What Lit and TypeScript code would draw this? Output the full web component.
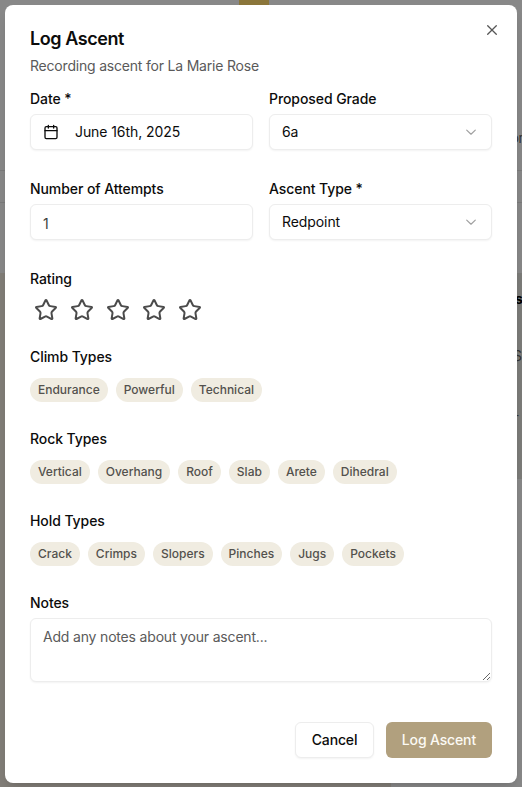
import { LitElement, html, css, svg } from "lit";
import { customElement, property, state } from "lit/decorators.js";

const calendar = svg`<path d="M8 2v4M16 2v4"/><rect width="18" height="18" x="3" y="4" rx="2"/><path d="M3 10h18"/>`;
const star = svg`<path d="M11.525 2.295a.53.53 0 0 1 .95 0l2.31 4.679a2.123 2.123 0 0 0 1.595 1.16l5.166.756a.53.53 0 0 1 .294.904l-3.736 3.638a2.123 2.123 0 0 0-.611 1.878l.882 5.14a.53.53 0 0 1-.771.56l-4.618-2.428a2.122 2.122 0 0 0-1.973 0L6.396 21.01a.53.53 0 0 1-.77-.56l.881-5.139a2.122 2.122 0 0 0-.611-1.879L2.16 9.795a.53.53 0 0 1 .294-.906l5.165-.755a2.122 2.122 0 0 0 1.597-1.16z"/>`;

const icon = (shape: unknown, size: number) => html`<svg
  class="icon" width=${size} height=${size} viewBox="0 0 24 24" fill="none"
  stroke="currentColor" stroke-width="2" stroke-linecap="round" stroke-linejoin="round"
>${shape}</svg>`;

@customElement("tag-group")
class TagGroup extends LitElement {
  @property() label = "";
  @property({ attribute: false }) tags: string[] = [];

  static styles = css`
    :host { display: flex; flex-direction: column; gap: 14px; }
    .label { font-size: 14px; line-height: 14px; font-weight: 500; letter-spacing: -0.08px; color: #0c0c0c; }
    .tags { display: flex; flex-wrap: wrap; gap: 8px; }
    .tag {
      display: flex; align-items: center; height: 24px; box-sizing: border-box;
      padding: 0 8px; border-radius: 12px; background: #f0ece1; color: #53514d;
      font-size: 12px; line-height: 16px; font-weight: 500; white-space: nowrap;
    }
  `;

  render() {
    return html`<span class="label">${this.label}</span>
      <div class="tags">${this.tags.map((t) => html`<span class="tag">${t}</span>`)}</div>`;
  }
}

@customElement("app-root")
class AppRoot extends LitElement {
  @state() attempts = "1";

  static styles = css`
    :host {
      display: block; position: relative; width: 522px; height: 787px; overflow: hidden;
      box-sizing: border-box; padding: 5px; background: #888888;
      font-family: Inter, sans-serif; font-size: 14px; color: #0c0c0c;
    }
    * { box-sizing: border-box; }
    .patch { position: absolute; }
    .gold { left: 239px; top: 0; width: 30px; height: 10px; background: #8b763b; }
    .photo { left: 0; top: 273px; width: 391px; height: 514px; background: #827e78; }
    .panel { right: 0; top: 273px; width: 40px; height: 206px; background: #7c7c79; }
    .rule { left: 0; width: 522px; height: 1px; background: #7b7b7b; }
    .rule-a { top: 170px; }
    .rule-b { top: 202px; }
    .peek { position: absolute; left: 515px; white-space: nowrap; line-height: 20px; }
    .peek-a { top: 128px; left: 511px; font-size: 13px; letter-spacing: -0.3px; color: #303030; }
    .peek-b { top: 289px; left: 515px; font-weight: 700; color: #000; }
    .peek-c { top: 346px; left: 513px; color: #343434; }
    .peek-d { top: 405px; left: 513px; color: #343434; }
    .dialog {
      position: relative; display: flex; flex-direction: column; width: 512px; height: 778px;
      padding: 24px 25px 25px; border-radius: 8px; background: #fff;
      box-shadow: 0 10px 15px -3px rgb(0 0 0 / 0.1), 0 4px 6px -4px rgb(0 0 0 / 0.1);
    }
    .close {
      position: absolute; right: 17px; top: 17px; width: 16px; height: 16px;
      padding: 0; border: 0; background: none; color: #565656;
    }
    .icon { display: block; flex: none; }
    .title { margin: 0; padding-top: 1px; font-size: 18px; line-height: 18px; font-weight: 600; letter-spacing: -0.43px; }
    .subtitle { margin: 8px 0 0; line-height: 20px; letter-spacing: -0.2px; color: #5a5a5a; }
    .form { display: flex; flex-direction: column; gap: 30px; margin-top: 16px; }
    .grid { display: grid; grid-template-columns: 1fr 1fr; gap: 32px 16px; }
    .field { display: flex; flex-direction: column; gap: 8px; }
    .label { line-height: 14px; font-weight: 500; letter-spacing: -0.08px; }
    .control {
      display: flex; align-items: center; width: 100%; height: 36px; padding: 0 12px; margin: 0;
      border: 1px solid #ededed; border-radius: 6px; background: #fff; outline: none;
      font: 400 14px/20px Inter, sans-serif; color: #0c0c0c; text-align: left;
      box-shadow: 0 1px 2px rgb(0 0 0 / 0.05);
    }
    .date { gap: 16px; letter-spacing: -0.08px; }
    .select { justify-content: space-between; letter-spacing: -0.08px; }
    .chevron { color: #a0a0a0; display: flex; }
    .number { color: #3c3c3c; padding-top: 2px; }
    .rating { margin-top: 2px; }
    .stars { display: flex; gap: 4px; }
    .star { padding: 4px; border: 0; background: none; color: #4b4b4b; }
    .after-rating { margin-top: -6px; }
    .notes { height: 64px; padding: 8px 12px; letter-spacing: -0.18px; resize: vertical; display: block; }
    .notes::placeholder { color: #5a5a5a; opacity: 1; }
    .actions { display: flex; justify-content: flex-end; gap: 12px; margin-top: auto; }
    .button {
      height: 36px; padding: 0 16px; border: 0; border-radius: 6px;
      font: 500 14px/20px Inter, sans-serif; letter-spacing: -0.15px; white-space: nowrap;
    }
    .cancel { padding: 0 15.5px; border: 1px solid #ededed; background: #fff; color: #0c0c0c; box-shadow: 0 1px 2px rgb(0 0 0 / 0.05); }
    .submit { background: #b1a07e; color: #fcfaf4; }
  `;

  private select(label: string, value: string) {
    return html`<div class="field">
      <span class="label">${label}</span>
      <button class="control select">${value}
        <span class="chevron">
          <svg width="16" height="16" viewBox="0 0 16 16" fill="none" stroke="currentColor"
            stroke-width="1.2" stroke-linecap="round" stroke-linejoin="round"><path d="M3.7 6.1 8 10.2l4.3-4.1"/></svg>
        </span>
      </button>
    </div>`;
  }

  render() {
    return html`
      <div class="patch gold"></div>
      <div class="patch rule rule-a"></div>
      <div class="patch rule rule-b"></div>
      <div class="patch photo"></div>
      <div class="patch panel"></div>
      <span class="peek peek-a">or</span>
      <span class="peek peek-b">s</span>
      <span class="peek peek-c">S</span>
      <span class="peek peek-d">-</span>
      <section class="dialog" role="dialog">
        <button class="close" aria-label="Close">
          <svg class="icon" width="16" height="16" viewBox="0 0 16 16" fill="none" stroke="currentColor"
            stroke-width="1.3" stroke-linecap="round"><path d="M3.7 3.7l8.6 8.6M12.3 3.7l-8.6 8.6"/></svg>
        </button>
        <h2 class="title">Log Ascent</h2>
        <p class="subtitle">Recording ascent for La Marie Rose</p>
        <div class="form">
          <div class="grid">
            <div class="field">
              <span class="label">Date *</span>
              <button class="control date">${icon(calendar, 16)}June 16th, 2025</button>
            </div>
            ${this.select("Proposed Grade", "6a")}
            <div class="field">
              <span class="label">Number of Attempts</span>
              <input class="control number" .value=${this.attempts} />
            </div>
            ${this.select("Ascent Type *", "Redpoint")}
          </div>
          <div class="field rating">
            <span class="label">Rating</span>
            <div class="stars">
              ${[1, 2, 3, 4, 5].map(() => html`<button class="star">${icon(star, 24)}</button>`)}
            </div>
          </div>
          <tag-group class="after-rating" label="Climb Types" .tags=${["Endurance", "Powerful", "Technical"]}></tag-group>
          <tag-group label="Rock Types" .tags=${["Vertical", "Overhang", "Roof", "Slab", "Arete", "Dihedral"]}></tag-group>
          <tag-group label="Hold Types" .tags=${["Crack", "Crimps", "Slopers", "Pinches", "Jugs", "Pockets"]}></tag-group>
          <div class="field">
            <span class="label">Notes</span>
            <textarea class="control notes" placeholder="Add any notes about your ascent..."></textarea>
          </div>
        </div>
        <div class="actions">
          <button class="button cancel">Cancel</button>
          <button class="button submit">Log Ascent</button>
        </div>
      </section>
    `;
  }
}
